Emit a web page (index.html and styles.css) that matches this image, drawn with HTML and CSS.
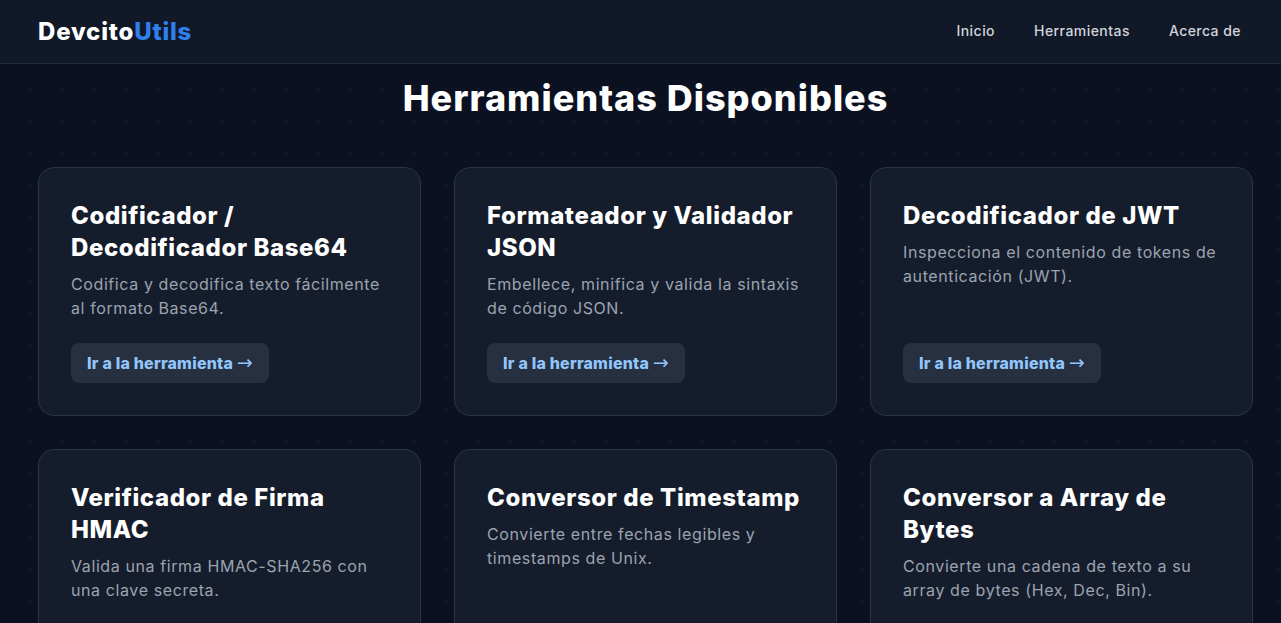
FILE: index.html
```html
<!DOCTYPE html>
<html lang="es">
<head>
<meta charset="utf-8">
<title>DevcitoUtils</title>
<link rel="stylesheet" href="styles.css">
</head>
<body>
<header class="topbar">
  <a class="logo" href="#">Devcito<span class="logo-accent">Utils</span></a>
  <nav class="nav">
    <a href="#">Inicio</a>
    <a href="#">Herramientas</a>
    <a href="#">Acerca de</a>
  </nav>
</header>
<main class="main">
  <h1 class="page-title">Herramientas Disponibles</h1>
  <section class="grid">
    <article class="card">
      <h2 class="card-title">Codificador / Decodificador Base64</h2>
      <p class="card-desc">Codifica y decodifica texto fácilmente al formato Base64.</p>
      <a class="card-btn" href="#">Ir a la herramienta <span class="arrow">→</span></a>
    </article>
    <article class="card">
      <h2 class="card-title">Formateador y Validador JSON</h2>
      <p class="card-desc">Embellece, minifica y valida la sintaxis de código JSON.</p>
      <a class="card-btn" href="#">Ir a la herramienta <span class="arrow">→</span></a>
    </article>
    <article class="card">
      <h2 class="card-title">Decodificador de JWT</h2>
      <p class="card-desc">Inspecciona el contenido de tokens de autenticación (JWT).</p>
      <a class="card-btn" href="#">Ir a la herramienta <span class="arrow">→</span></a>
    </article>
    <article class="card">
      <h2 class="card-title">Verificador de Firma HMAC</h2>
      <p class="card-desc">Valida una firma HMAC-SHA256 con una clave secreta.</p>
      <a class="card-btn" href="#">Ir a la herramienta <span class="arrow">→</span></a>
    </article>
    <article class="card">
      <h2 class="card-title">Conversor de Timestamp</h2>
      <p class="card-desc">Convierte entre fechas legibles y timestamps de Unix.</p>
      <a class="card-btn" href="#">Ir a la herramienta <span class="arrow">→</span></a>
    </article>
    <article class="card">
      <h2 class="card-title">Conversor a Array de Bytes</h2>
      <p class="card-desc">Convierte una cadena de texto a su array de bytes (Hex, Dec, Bin).</p>
      <a class="card-btn" href="#">Ir a la herramienta <span class="arrow">→</span></a>
    </article>
  </section>
</main>
</body>
</html>
```
FILE: styles.css
```css
* { box-sizing: border-box; }
html, body { margin: 0; padding: 0; }
body {
  font-family: Inter, "Noto Sans", sans-serif;
  background-color: #0b1120;
  background-image: radial-gradient(circle, #151e2e 1px, transparent 1.2px);
  background-size: 32px 32px;
  background-position: 14px 9px;
  color: #fff;
  min-height: 100vh;
}
a { text-decoration: none; }
.topbar {
  height: 64px;
  background: #111827;
  border-bottom: 1px solid #1f2937;
  display: flex;
  align-items: center;
  justify-content: space-between;
  padding: 0 40px 0 38px;
}
.logo {
  font-size: 24px;
  font-weight: 800;
  color: #fff;
  letter-spacing: 0.8px;
  line-height: 28px;
}
.logo-accent { color: #2f80ed; }
.nav { display: flex; gap: 39px; margin-top: -2px; }
.nav a {
  color: #d1d5db;
  font-size: 14px;
  font-weight: 500;
  letter-spacing: 0.45px;
}
.main { padding: 14px 28px 40px 38px; }
.page-title {
  margin: 0 0 49px;
  text-align: center;
  font-size: 36px;
  line-height: 40px;
  font-weight: 800;
  letter-spacing: 1px;
}
.grid {
  display: grid;
  grid-template-columns: repeat(3, 383px);
  gap: 33px;
}
.card {
  background: #151d2c;
  border: 1px solid #2a3444;
  border-radius: 16px;
  padding: 32px;
  display: flex;
  flex-direction: column;
  min-height: 249px;
}
.card-title {
  margin: 0;
  font-size: 24px;
  line-height: 32px;
  font-weight: 800;
  color: #fff;
  letter-spacing: 0.6px;
}
.card-desc {
  margin: 8px 0 23px;
  font-size: 16px;
  line-height: 24px;
  color: #9ca3af;
  letter-spacing: 0.6px;
}
.card-btn {
  margin-top: auto;
  align-self: flex-start;
  background: #263041;
  color: #93c5fd;
  font-weight: 800;
  font-size: 16px;
  line-height: 24px;
  height: 40px;
  padding: 8px 16px;
  border-radius: 8px;
  letter-spacing: 0.2px;
}
.arrow {
  font-family: "DejaVu Sans", sans-serif;
  font-weight: 400;
  font-size: 19px;
  line-height: 1;
  letter-spacing: 0;
}
```
